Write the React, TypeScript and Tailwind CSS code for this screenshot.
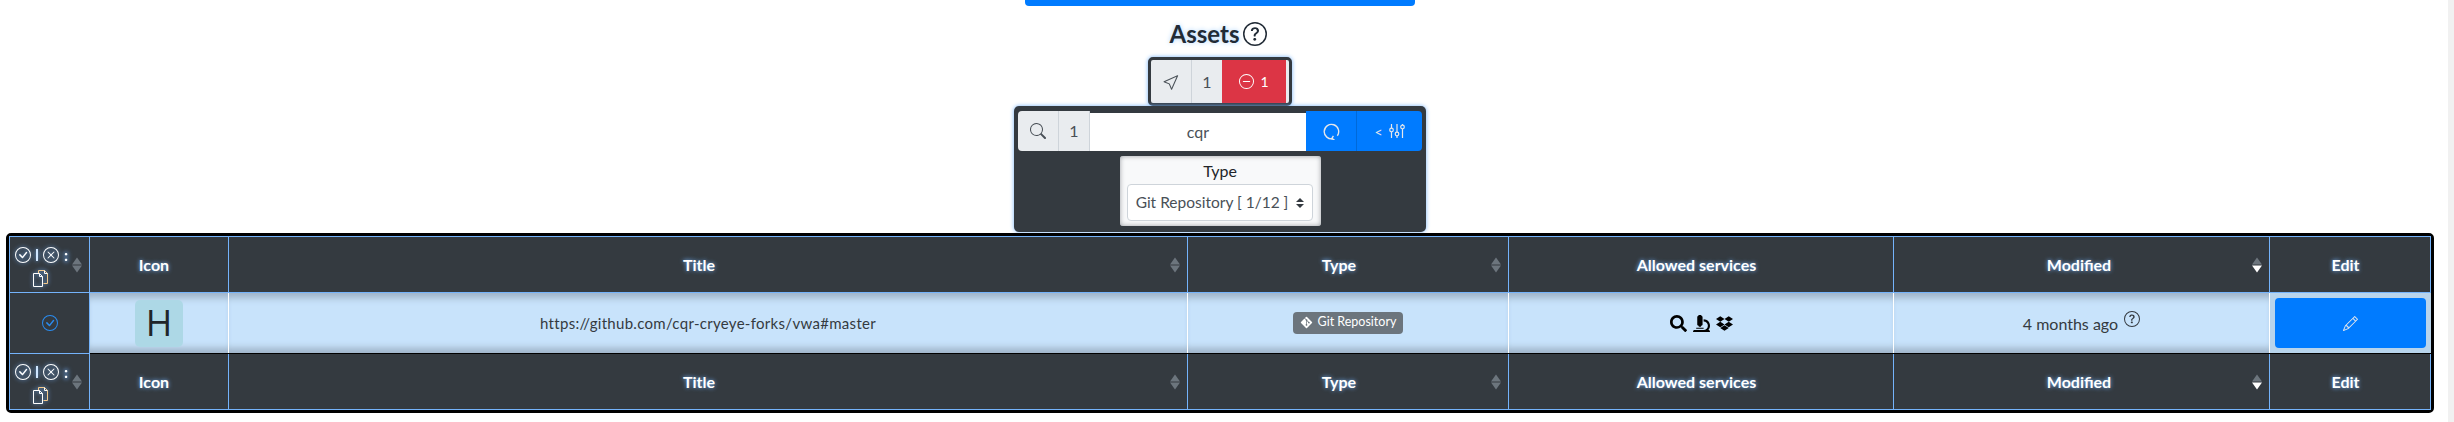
import { BsCheckCircle, BsCursor, BsDashCircle, BsPencil, BsQuestionCircle, BsSearch, BsXCircle } from "react-icons/bs";
import { FaDropbox, FaGitAlt, FaMicroscope, FaSearch } from "react-icons/fa";

const columns = [
  { title: "Title", width: "w-[959px]", sort: true, shift: "pr-[18px]" },
  { title: "Type", width: "w-[321px]", sort: true, shift: "pr-[18px]" },
  { title: "Allowed services", width: "w-[385px]", sort: false, shift: "pr-[9px]" },
  { title: "Modified", width: "w-[376px]", sort: true, active: true, shift: "pr-[5px]" },
];

function SortIcon({ active }: { active?: boolean }) {
  return (
    <span className="absolute right-[7px] top-1/2 -translate-y-1/2 flex flex-col gap-px">
      <span className="w-0 h-0 border-x-[5px] border-x-transparent border-b-[7px] border-b-[#6c757d]" />
      <span className={active ? "w-0 h-0 border-x-[5px] border-x-transparent border-t-[7px] border-t-white" : "w-0 h-0 border-x-[5px] border-x-transparent border-t-[7px] border-t-[#6c757d]"} />
    </span>
  );
}

function CopyIcon() {
  return (
    <svg viewBox="0 0 17 17" className="w-[17px] h-[17px]" fill="none" stroke="currentColor" strokeWidth="1">
      <path d="M.5 3.5h6l3 3v10h-9z" />
      <path d="M6.5 3.5v3h3" />
      <path d="M5.5 3V.5h6l3 3v10h-4" stroke="#f5c98a" />
      <path d="M11.5.5v3h3" />
    </svg>
  );
}

function SlidersIcon() {
  return (
    <svg viewBox="0 0 16 16" className="w-[16px] h-[16px]" fill="none" stroke="currentColor" strokeWidth="1.2">
      <path d="M2.5 1v4M2.5 9v6M8 1v8M8 13v2M13.5 1v1M13.5 6v9" />
      <circle cx="2.5" cy="7" r="1.8" />
      <circle cx="8" cy="11" r="1.8" />
      <circle cx="13.5" cy="4" r="1.8" />
    </svg>
  );
}

function RefreshIcon() {
  return (
    <svg viewBox="0 0 16 16" className="w-[17px] h-[17px]" fill="none" stroke="currentColor" strokeWidth="1.3">
      <path d="M9.5 14.7A6.8 6.8 0 1 1 13.5 12" />
      <path d="M9.8 12.2l-1.6 2.5 2.6 1.1" />
    </svg>
  );
}

function HeadRow() {
  const th = "relative border border-[#74b3fb] bg-[#343a40] text-white text-[16px] font-bold text-center p-0 [text-shadow:0_0_4px_#74b3fb]";
  return (
    <tr className="h-[56px]">
      <th className={th}>
        <div className="flex flex-col items-center pr-[16px] gap-[3px] font-normal [filter:drop-shadow(0_0_2px_#74b3fb)]">
          <div className="flex items-center gap-[5px] text-[16px]">
            <BsCheckCircle className="w-4 h-4" />
            <span className="w-[2px] h-[12px] bg-[#cfe6ff]" />
            <BsXCircle className="w-4 h-4" />
            <span className="font-bold">:</span>
          </div>
          <CopyIcon />
        </div>
        <SortIcon />
      </th>
      <th className={th}><span className="relative -left-[5px]">Icon</span></th>
      {columns.map((c) => (
        <th key={c.title} className={`${th} ${c.shift}`}>
          {c.title}
          {c.sort && <SortIcon active={c.active} />}
        </th>
      ))}
      <th className={`${th} pr-[9px]`}>Edit</th>
    </tr>
  );
}

export default function App() {
  const td = "border-x border-x-white border-b border-b-black text-center p-0 text-[#343a40] text-[16px] bg-[#c8e3fb] shadow-[inset_0_10px_7px_-5px_#9fb3c8,inset_0_-10px_7px_-5px_#9fb3c8]";
  return (
    <div className="relative h-[422px] overflow-hidden bg-white font-['Lato','Open_Sans',sans-serif]">
      <div className="mx-auto w-[390px] h-[6px] bg-[#007bff] rounded-b-[4px] relative left-[-7px]" />
      <div className="flex flex-col items-center relative left-[-7px]">
        <div className="flex items-center gap-[4px] h-[51px] pt-[5px] pr-[3px] text-[#212b36] [text-shadow:0_0_5px_#a9d2fb]">
          <span className="text-[24px] font-bold">Assets</span>
          <BsQuestionCircle className="w-[24px] h-[24px]" />
        </div>

        <div className="flex h-[49px] w-[144px] border-[3px] border-[#343a40] rounded-[5px] shadow-[0_0_4px_#74b3fb] bg-[#e9ecef] text-[16px]">
          <div className="w-[41px] flex items-center justify-center border-r border-[#ced4da] text-[#495057]"><BsCursor className="w-[17px] h-[17px]" /></div>
          <div className="w-[30px] flex items-center justify-center text-[#495057]">1</div>
          <div className="w-[64px] flex items-center justify-center gap-[6px] bg-[#dc3545] text-white text-[14px]"><BsDashCircle className="w-[15px] h-[15px]" />1</div>
        </div>

        <div className="w-[412px] h-[126px] bg-[#343a40] rounded-[5px] shadow-[0_0_4px_#74b3fb] px-[4px] pt-[5px] flex flex-col items-center">
          <div className="flex w-full h-[40px] text-[16px]">
            <div className="w-[41px] flex items-center justify-center bg-[#e9ecef] border-r border-[#ced4da] rounded-l-[4px] text-[#495057]"><BsSearch className="w-[16px] h-[16px]" /></div>
            <div className="w-[31px] flex items-center justify-center bg-[#e9ecef] border-r border-[#ced4da] text-[#495057]">1</div>
            <div className="w-[216px] mt-[2px] bg-white flex items-center justify-center text-[#495057]">cqr</div>
            <div className="w-[51px] flex items-center justify-center bg-[#007bff] border-r border-[#0069d9] text-[#e5e7eb]"><RefreshIcon /></div>
            <div className="flex-1 flex items-center justify-center gap-[6px] bg-[#007bff] rounded-r-[4px] text-[#e5e7eb] text-[14px]">&lt;<SlidersIcon /></div>
          </div>
          <div className="mt-[5px] w-[201px] h-[70px] bg-[#f8f9fa] rounded-[3px] shadow-[inset_0_0_5px_#9a9ea3] flex flex-col items-center pt-[3px] text-[16px] text-[#212529]">
            <div className="h-[24px] leading-[24px]">Type</div>
            <div className="mt-[1px] w-[186px] h-[37px] bg-white border border-[#ced4da] rounded-[4px] flex items-center justify-center gap-[8px] text-[15.5px] text-[#495057]">
              Git Repository [ 1/12 ]
              <span className="flex flex-col gap-[2px]">
                <span className="w-0 h-0 border-x-[4px] border-x-transparent border-b-[4px] border-b-[#343a40]" />
                <span className="w-0 h-0 border-x-[4px] border-x-transparent border-t-[4px] border-t-[#343a40]" />
              </span>
            </div>
          </div>
        </div>
      </div>

      <div className="absolute left-[6px] top-[233px] w-[2428px] border-[3px] border-black rounded-[5px] bg-white">
        <table className="table-fixed border-collapse w-full">
          <colgroup>
            <col className="w-[80px]" />
            <col className="w-[139px]" />
            {columns.map((c) => <col key={c.title} className={c.width} />)}
            <col />
          </colgroup>
          <thead><HeadRow /></thead>
          <tbody>
            <tr className="h-[60px]">
              <td className="bg-[#343a40] border border-[#74b3fb] text-center p-0">
                <BsCheckCircle className="w-4 h-4 mx-auto text-[#2a8cf0]" />
              </td>
              <td className={td}>
                <div className="w-[48px] h-[47px] ml-[45px] rounded-[5px] bg-[#add8e6] flex items-center justify-center text-[36px] leading-none font-['Open_Sans'] text-[#212529]">H</div>
              </td>
              <td className={td}><span className="text-[15px] tracking-[0.3px]">https://github.com/cqr-cryeye-forks/vwa#master</span></td>
              <td className={td}>
                <span className="inline-flex items-center gap-[5px] h-[22px] px-[7px] rounded-[4px] bg-[#6c757d] text-white text-[12.5px]">
                  <FaGitAlt className="w-[13px] h-[13px]" />
                  Git Repository
                </span>
              </td>
              <td className={td}>
                <div className="flex items-center justify-center gap-[6px] text-black text-[17px]">
                  <FaSearch /><FaMicroscope /><FaDropbox />
                </div>
              </td>
              <td className={td}>
                4 months ago <BsQuestionCircle className="inline w-[16px] h-[16px] align-[3px] ml-[2px]" />
              </td>
              <td className="bg-[#b8d4ec] p-[5px] border-l border-l-white border-b border-b-black">
                <div className="h-[50px] bg-[#007bff] rounded-[4px] flex items-center justify-center text-[#e5e7eb]"><BsPencil className="w-[15px] h-[15px]" /></div>
              </td>
            </tr>
          </tbody>
          <tfoot><HeadRow /></tfoot>
        </table>
      </div>
      <div className="absolute right-0 top-0 bottom-0 w-[6px] bg-[#f1f1f1]" />
    </div>
  );
}
